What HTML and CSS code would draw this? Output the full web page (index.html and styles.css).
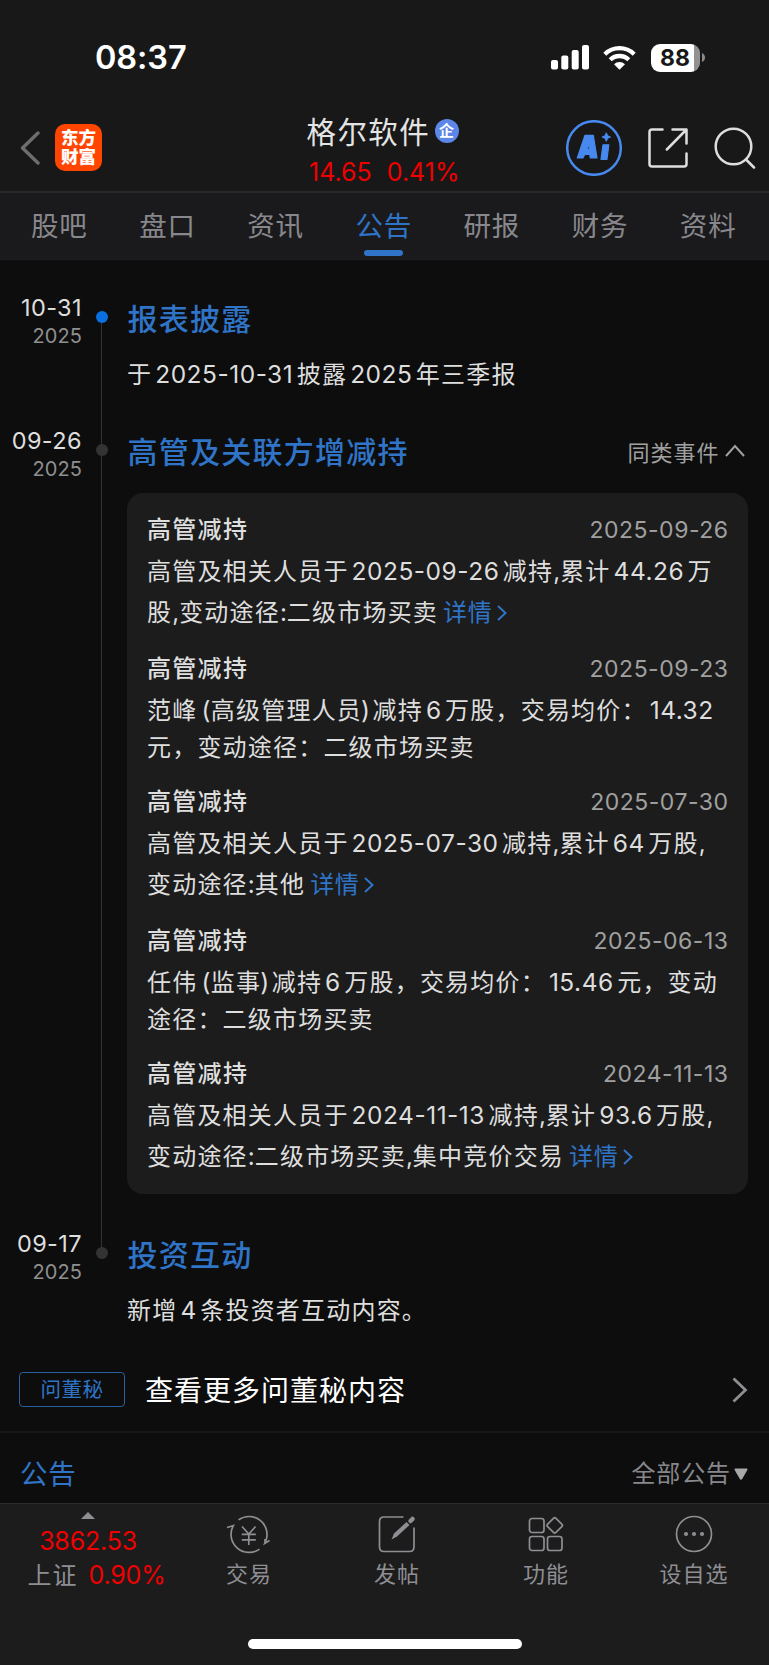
FILE: index.html
```html
<!DOCTYPE html>
<html lang="zh-CN">
<head>
<meta charset="utf-8">
<title>格尔软件 公告</title>
<link rel="stylesheet" href="styles.css">
</head>
<body>
<div class="app">
  <div class="status">
    <span class="time">08:37</span>
    <div class="status-icons">
      <svg class="signal" width="39" height="25" viewBox="0 0 39 25" fill="#fff"><rect x="0" y="15" width="7" height="9.500" rx="2"/><rect x="10.300" y="10.500" width="7" height="14" rx="2"/><rect x="20.700" y="5" width="7" height="19.500" rx="2"/><rect x="31" y="0" width="7" height="24.500" rx="2"/></svg>
      <svg class="wifi" width="33" height="25" viewBox="0 0 33 25" fill="none" stroke="#fff" stroke-width="4.300"><path d="M1.800 9.200a21 21 0 0 1 29.400 0"/><path d="M7.200 14.800a13.300 13.300 0 0 1 18.600 0"/><path d="M11 19.200a8 8 0 0 1 11 0L16.500 24.800z" fill="#fff" stroke="none"/></svg>
      <div class="battery"><span>88</span></div>
      <svg class="cap" width="3" height="9" viewBox="0 0 3 9"><path d="M0 0q3 1.500 3 4.500t-3 4.500z" fill="#8a8a8a"/></svg>
    </div>
  </div>

  <header class="header">
    <div class="left">
      <svg width="20" height="36" viewBox="0 0 20 36" fill="none" stroke="#6e6e6e" stroke-width="3.400" stroke-linecap="round" stroke-linejoin="round"><path d="M18 3 2.500 18 18 33"/></svg>
      <div class="logo"><span>东方</span><span>财富</span></div>
    </div>
    <div class="title">
      <div class="name">格尔软件<span class="badge">企</span></div>
      <div class="quote"><span>14.65</span><span>0.41%</span></div>
    </div>
    <div class="actions">
      <svg width="56" height="56" viewBox="0 0 56 56"><circle cx="28" cy="28" r="26.800" fill="none" stroke="#4789ee" stroke-width="2.500"/><path fill="#4789ee" fill-rule="evenodd" stroke="#4789ee" stroke-width="1.200" stroke-linejoin="round" d="M19 15.300H27.300L31 38H24.300L23.700 34.500H18.700L17 38H11.300ZM23 23.500 20.800 29H23.400ZM37 24.800H42.800L41 39.300H35ZM40.300 13 41.500 15.800 44.300 17 41.500 18.200 40.300 21 39.100 18.200 36.300 17 39.100 15.800Z"/></svg>
      <svg width="40" height="40" viewBox="0 0 40 40" fill="none" stroke="#dedede" stroke-width="2.500" stroke-linecap="round" stroke-linejoin="round"><path d="M14.500 1.500H4Q1.500 1.500 1.500 4V36Q1.500 38.500 4 38.500H36Q38.500 38.500 38.500 36V25.500"/><path d="M24.500 1.500H38.500V15.500M38 2 18.800 21.500"/></svg>
      <svg width="42" height="42" viewBox="0 0 42 42" fill="none" stroke="#dedede" stroke-width="2.500" stroke-linecap="round"><circle cx="19.500" cy="19.500" r="17.800"/><path d="M32 32.500 40 40.500"/></svg>
    </div>
  </header>

  <nav class="tabs">
    <span>股吧</span><span>盘口</span><span>资讯</span><span class="active">公告</span><span>研报</span><span>财务</span><span>资料</span>
  </nav>

  <main class="timeline">
    <section class="event">
      <div class="when"><b>10-31</b><i>2025</i></div>
      <div class="rail"><span class="dot current"></span></div>
      <div class="body">
        <div class="head"><h2>报表披露</h2></div>
        <p class="summary">于<em>2025-10-31</em>披露<em>2025</em>年三季报</p>
      </div>
    </section>

    <section class="event">
      <div class="when"><b>09-26</b><i>2025</i></div>
      <div class="rail"><span class="dot"></span></div>
      <div class="body">
        <div class="head"><h2>高管及关联方增减持</h2>
          <span class="similar">同类事件<svg width="20" height="13" viewBox="0 0 20 13" fill="none" stroke="#a0a0a0" stroke-width="2"><path d="M1 12 10 2 19 12"/></svg></span></div>
        <div class="card">
          <article class="linked">
            <h3>高管减持<time>2025-09-26</time></h3>
            <p>高管及相关人员于<em>2025-09-26</em>减持<u>,</u>累计<em>44.26</em>万</p>
            <p>股<u>,</u>变动途径<u>:</u>二级市场买卖<a>详情<svg width="10" height="16" viewBox="0 0 10 16"><path d="M1 1 8.500 8 1 15"/></svg></a></p>
          </article>
          <article>
            <h3>高管减持<time>2025-09-23</time></h3>
            <p>范峰<em class="open">(</em>高级管理人员<em class="close">)</em>减持<em>6</em>万股，交易均价：<em>14.32</em></p>
            <p>元，变动途径：二级市场买卖</p>
          </article>
          <article class="linked">
            <h3>高管减持<time>2025-07-30</time></h3>
            <p>高管及相关人员于<em>2025-07-30</em>减持<u>,</u>累计<em>64</em>万股,</p>
            <p>变动途径<u>:</u>其他<a>详情<svg width="10" height="16" viewBox="0 0 10 16"><path d="M1 1 8.500 8 1 15"/></svg></a></p>
          </article>
          <article>
            <h3>高管减持<time>2025-06-13</time></h3>
            <p>任伟<em class="open">(</em>监事<em class="close">)</em>减持<em>6</em>万股，交易均价：<em>15.46</em>元，变动</p>
            <p>途径：二级市场买卖</p>
          </article>
          <article class="linked">
            <h3>高管减持<time>2024-11-13</time></h3>
            <p>高管及相关人员于<em>2024-11-13</em>减持<u>,</u>累计<em>93.6</em>万股,</p>
            <p>变动途径<u>:</u>二级市场买卖<u>,</u>集中竞价交易<a>详情<svg width="10" height="16" viewBox="0 0 10 16"><path d="M1 1 8.500 8 1 15"/></svg></a></p>
          </article>
        </div>
      </div>
    </section>

    <section class="event last">
      <div class="when"><b>09-17</b><i>2025</i></div>
      <div class="rail"><span class="dot"></span></div>
      <div class="body">
        <div class="head"><h2>投资互动</h2></div>
        <p class="summary">新增<em>4</em>条投资者互动内容。</p>
      </div>
    </section>
  </main>

  <div class="more">
    <span class="tag">问董秘</span>
    <span class="more-text">查看更多问董秘内容</span>
    <svg width="16" height="26" viewBox="0 0 16 26" fill="none" stroke="#8e8e93" stroke-width="2.800"><path d="M1.500 1.500 13.500 13 1.500 24.500"/></svg>
  </div>

  <div class="notices">
    <span class="notices-title">公告</span>
    <span class="filter">全部公告<svg width="14" height="12" viewBox="0 0 14 12"><path d="M1.500.5h11q1.500.2.800 1.500L8.200 11q-1.200 1.500-2.400 0L.7 2Q0 .7 1.500.5z" fill="#a8a8a8"/></svg></span>
  </div>

  <footer class="bottom">
    <div class="items">
      <div class="index">
        <svg width="14" height="7" viewBox="0 0 14 7"><path d="M7 0 14 7H0z" fill="#8e8e93"/></svg>
        <div class="points">3862.53</div>
        <div class="change">上证<span>0.90%</span></div>
      </div>
      <div class="item">
        <svg width="46" height="40" viewBox="0 0 46 40"><path d="M12.500 4.900A18 18 0 0 1 39.600 26.500L38.800 28.300 43.500 25.500M39 28.500V24"/><path d="M1 12.500 7.300 10.700A18 18 0 0 0 33.500 34.100"/><path d="M16 11.500 22.800 19 29.600 11.500M22.800 19V30M15.800 19.300h14M15.800 24.800h14"/></svg>
        <span>交易</span>
      </div>
      <div class="item">
        <svg width="38" height="40" viewBox="0 0 38 40"><path d="M25.500 2H6Q1.500 2 1.500 6.500V32Q1.500 36.500 6 36.500H31.500Q36 36.500 36 32V12.500"/><path d="M13.500 24.500 16 18.500 28.500 7 31.500 10 19 21.500Z" fill="#8e8e93" stroke="none"/><path d="M32.500 6 34.500 4" stroke-width="4.500" stroke-linecap="round"/></svg>
        <span>发帖</span>
      </div>
      <div class="item">
        <svg width="36" height="40" viewBox="0 0 36 40"><rect x="1.500" y="3.500" width="14.500" height="14" rx="2.500"/><rect x="1.500" y="21.500" width="14.500" height="14" rx="2.500"/><rect x="19.500" y="21.500" width="14.500" height="14" rx="2.500"/><rect x="20.800" y="4.500" width="11.800" height="11.800" rx="1.800" transform="rotate(45 26.700 10.400)"/></svg>
        <span>功能</span>
      </div>
      <div class="item">
        <svg width="38" height="40" viewBox="0 0 38 40"><circle cx="19" cy="19" r="17.500"/><g fill="#8e8e93" stroke="none"><circle cx="11" cy="19" r="2.100"/><circle cx="19" cy="19" r="2.100"/><circle cx="27" cy="19" r="2.100"/></g></svg>
        <span>设自选</span>
      </div>
    </div>
    <div class="home"></div>
  </footer>
</div>
</body>
</html>
```
FILE: styles.css
```css
* { box-sizing: border-box; }
body { margin: 0; background: #0d0d0d; font-family: Inter, "Noto Sans CJK SC", sans-serif; color: #dedede; }
.app { width: 769px; height: 1665px; display: flex; flex-direction: column; overflow: hidden; white-space: nowrap; }
svg { display: block; flex: none; }
h2, h3, p { margin: 0; font-weight: 400; }
em, i { font-style: normal; }
u { text-decoration: none; letter-spacing: 0; }

.status { height: 104px; flex: none; background: #181818; display: flex; justify-content: space-between; padding: 37px 64.5px 0 95px; }
.time { font-size: 32.5px; font-weight: 600; line-height: 41px; color: #fff; letter-spacing: -.1px; }
.status-icons { display: flex; align-items: center; height: 41px; }
.wifi { margin: 0 14.5px 0 13px; }
.battery { width: 49px; height: 28px; border-radius: 9px; background: linear-gradient(90deg, #fff 43px, #919191 43px); color: #181818; font-size: 23px; font-weight: 700; line-height: 28px; text-align: center; }
.cap { margin-left: 2px; }

.header { height: 89px; flex: none; background: #181818; border-bottom: 2px solid #29292a; display: grid; grid-template-columns: 260px 1fr 260px; }
.left { display: flex; align-items: center; gap: 15px; padding: 0 0 0 20px; }
.logo { width: 47px; height: 47px; border-radius: 10px; background: #ff4500; color: #fff; display: flex; flex-direction: column; align-items: center; padding-top: 4px; font-size: 17.500px; font-weight: 900; line-height: 19px; }
.title { padding-top: 7px; }
.name { display: flex; align-items: center; height: 38px; padding-left: 46.5px; font-size: 29.5px; letter-spacing: 1.4px; color: #e4e4e4; }
.badge { width: 24px; height: 24px; margin: 2px 0 0 4.5px; border-radius: 50%; background: #5c86e8; color: #fff; font-size: 15px; font-weight: 700; line-height: 23px; text-align: center; letter-spacing: 0; }
.quote { display: flex; gap: 15px; padding-left: 49px; font-size: 25px; line-height: 47px; height: 42px; letter-spacing: 0; color: #f00000; }
.actions { display: flex; align-items: center; padding: 0 0 0 57px; gap: 26px; }

.tabs { height: 67px; flex: none; background: #1a1a1d; border-bottom: 1px solid #1e1e20; display: flex; justify-content: space-between; padding: 0 32.5px 0 31px; }
.tabs span { font-size: 27.500px; line-height: 67px; letter-spacing: .8px; color: #88888c; }
.tabs .active { color: #2f74c6; display: flex; flex-direction: column; align-items: center; }
.active::after { content: ""; width: 39px; height: 6px; margin-top: -10px; border-radius: 3px; background: #2f74c6; }

.timeline { padding-top: 32px; }
.event { display: grid; grid-template-columns: 82px 39px 1fr; height: 133px; }
.event:nth-child(2) { height: 803px; }
.event.last { height: 120px; }
.when { display: flex; flex-direction: column; align-items: flex-end; }
.when b { font-size: 23.5px; font-weight: 400; line-height: 32px; letter-spacing: .4px; }
.when i { font-size: 20px; line-height: 24px; letter-spacing: .1px; color: #8f8f8f; }
.rail { position: relative; }
.rail::before { content: ""; position: absolute; left: 19px; top: 25px; bottom: -25px; width: 1px; background: #333; }
.last .rail::before { display: none; }
.dot { position: absolute; left: 14px; top: 18.5px; width: 12px; height: 12px; border-radius: 50%; background: #333; }
.dot.current { background: #0a6fe0; }
.body { padding: 0 21px 0 6px; }
.head { display: flex; justify-content: space-between; align-items: center; height: 50px; }
h2 { padding-left: .5px; font-size: 30px; font-weight: 500; letter-spacing: 1.25px; color: #2f74c6; }
.similar { display: flex; align-items: center; gap: 5px; padding-right: 3.5px; margin-top: 1px; font-size: 22px; letter-spacing: 1px; color: #a0a0a0; }
.summary { height: 40px; margin-top: 12px; font-size: 24px; line-height: 40px; letter-spacing: 1.2px; }
em { margin: 0 3.5px 0 3px; letter-spacing: .5px; font-size: 24.5px; }
em.open { margin: 0 0 0 4px; }
em.close { margin: 0 2px 0 -1px; }

.card { margin-top: 17.5px; height: 701px; border-radius: 16px; background: #1c1c1c; padding: 16px 19.5px 0 20px; }
.card article { height: 133px; }
.card .linked { height: 139px; }
h3 { display: flex; justify-content: space-between; align-items: center; height: 38px; margin-bottom: 6px; font-size: 24px; font-weight: 500; letter-spacing: 1.3px; color: #dedede; }
.linked h3 { margin-bottom: 4.5px; }
time { font-size: 23px; font-weight: 400; letter-spacing: .5px; color: #a0a0a0; margin: 4px 0 0 0; }
.card p { font-size: 24px; line-height: 37px; height: 37px; letter-spacing: 1.2px; }
.card .linked p { line-height: 41px; height: 41px; }
a { color: #2f74c6; margin-left: 5px; letter-spacing: .6px; }
a svg { display: inline-block; margin-left: 5px; fill: none; stroke: #2f74c6; stroke-width: 2; }

.more { flex: none; height: 85px; display: flex; align-items: center; padding: 0 21.5px 0 19px; border-bottom: 2px solid #181818; }
.tag { width: 106px; height: 35px; border: 1px solid #285f9f; border-radius: 4px; color: #2f74c6; font-size: 20.5px; line-height: 34px; text-align: center; letter-spacing: .5px; }
.more-text { flex: 1; padding: 0 0 2px 20px; font-size: 28px; letter-spacing: 1px; color: #fff; }
.notices { flex: none; height: 70px; display: flex; justify-content: space-between; padding: 12px 21px 0 20px; line-height: 58px; }
.notices-title { font-size: 27.5px; letter-spacing: .8px; color: #2f74c6; }
.filter { display: flex; align-items: center; gap: 3px; font-size: 24px; letter-spacing: .9px; color: #88888c; height: 58px; }

.bottom { flex: none; height: 162px; background: #1c1c1c; border-top: 1px solid #2b2b2b; }
.items { display: grid; grid-template-columns: 176px 146px 150px 148px 148px; height: 130px; color: #8e8e93; }
.index { display: flex; flex-direction: column; align-items: center; padding-top: 7.5px; }
.points { font-size: 25px; line-height: 34px; margin-top: 5.5px; letter-spacing: -.2px; color: #f00000; }
.change { font-size: 24px; line-height: 34px; letter-spacing: 1px; padding-left: 17px; }
.change span { margin-left: 11px; font-size: 25px; letter-spacing: -.2px; color: #f00000; }
.item { display: flex; flex-direction: column; align-items: center; padding-top: 10.5px; }
.item svg { fill: none; stroke: #8e8e93; stroke-width: 1.700; }
.item span { font-size: 22px; line-height: 34px; margin-top: 2px; letter-spacing: 1px; }
.home { width: 274px; height: 10px; margin: 5px auto 0; border-radius: 5px; background: #fff; }
```
